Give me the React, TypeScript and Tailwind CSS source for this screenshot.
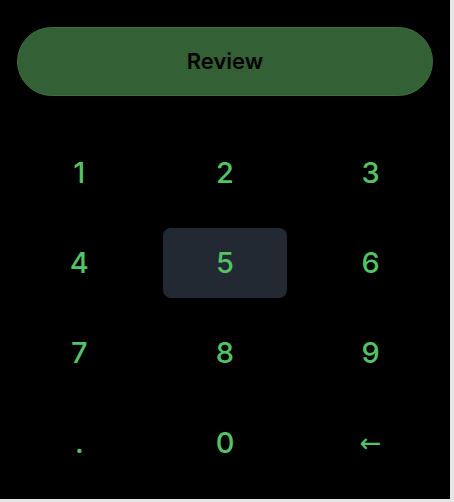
import React from "react";

const keys = ["1", "2", "3", "4", "5", "6", "7", "8", "9", ".", "0", "←"];

export default function App() {
  return (
    <div className="w-[454px] h-[502px] bg-[#e6e6e6]" style={{ fontFamily: "Inter, 'Noto Sans', sans-serif" }}>
      <div className="w-[450px] h-[499px] bg-black px-[17px] pt-[27px]">
        <button className="w-full h-[69px] rounded-full bg-[#336035] border border-[#3d6e3f] text-black text-[22px] font-semibold flex items-center justify-center">
          Review
        </button>
        <div className="mt-[42px] grid grid-cols-3 gap-x-[21px] gap-y-[20px]">
          {keys.map((k) => (
            <div
              key={k}
              className={`h-[70px] rounded-lg flex items-center justify-center text-[29px] font-medium text-[#52c465] ${k === "5" ? "bg-[#222933]" : ""}`}
            >
              {k === "←" ? (
                <span className="text-[26px] font-normal" style={{ fontFamily: "'DejaVu Sans', sans-serif" }}>←</span>
              ) : (
                k
              )}
            </div>
          ))}
        </div>
      </div>
    </div>
  );
}
